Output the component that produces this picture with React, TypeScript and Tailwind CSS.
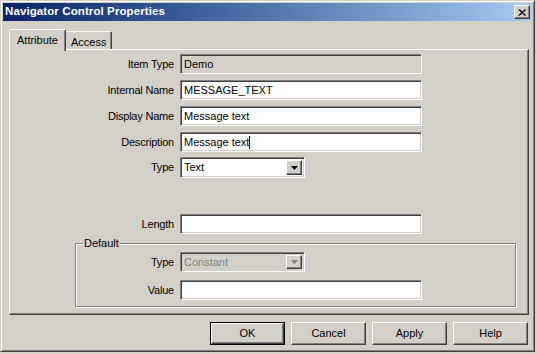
import React from "react";

const font = { fontFamily: '"Liberation Sans", Arial, sans-serif' };

// win2k style 3d edges
const sunken =
  "border border-t-[#808080] border-l-[#808080] border-b-white border-r-white shadow-[inset_1px_1px_0_#404040,inset_-1px_-1px_0_#d4d0c8]";
const raised =
  "border border-t-white border-l-white border-r-[#404040] border-b-[#404040] shadow-[inset_-1px_-1px_0_#808080]";

const Arrow = ({ disabled }: { disabled?: boolean }) => (
  <div className={`w-[16px] h-full flex items-center justify-center bg-[#d4d0c8] ${raised}`}>
    <svg width="7" height="4" viewBox="0 0 7 4">
      <path d="M0 0h7L3.5 4z" fill={disabled ? "#808080" : "#000"} />
    </svg>
  </div>
);

const TextField = ({
  value,
  disabled,
  cursor,
}: {
  value?: string;
  disabled?: boolean;
  cursor?: boolean;
}) => (
  <div
    className={`ml-[6px] w-[242px] h-[20px] flex items-center pl-[3px] text-[11px] ${sunken} ${
      disabled ? "bg-[#d4d0c8]" : "bg-white"
    }`}
  >
    <span>{value}</span>
    {cursor && <span className="w-[1px] h-[13px] bg-black" />}
  </div>
);

const Select = ({ value, disabled, h = "h-[21px]" }: { value: string; disabled?: boolean; h?: string }) => (
  <div
    className={`ml-[6px] w-[125px] ${h} flex items-stretch text-[11px] p-[2px] ${sunken} ${
      disabled ? "bg-[#d4d0c8]" : "bg-white"
    }`}
  >
    <span className={`flex-1 flex items-center pl-[1px] ${disabled ? "text-[#808080]" : ""}`}>{value}</span>
    <Arrow disabled={disabled} />
  </div>
);

const Row = ({
  label,
  w = "w-[164px]",
  className = "",
  children,
}: {
  label: string;
  w?: string;
  className?: string;
  children: React.ReactNode;
}) => (
  <div className={`flex items-center ${className}`}>
    <div className={`${w} text-right text-[11px] tracking-[-0.2px]`}>{label}</div>
    {children}
  </div>
);

const Button = ({ label, isDefault }: { label: string; isDefault?: boolean }) =>
  isDefault ? (
    <div className="w-[75px] h-[23px] border border-black">
      <div className={`w-full h-full flex items-center justify-center text-[11px] ${raised}`}>{label}</div>
    </div>
  ) : (
    <div className={`w-[75px] h-[23px] flex items-center justify-center text-[11px] ${raised}`}>{label}</div>
  );

export default function App() {
  return (
    <div className="w-[537px] h-[354px] bg-[#d4d0c8] text-black" style={font}>
      <div className="w-[535px] h-[352px] p-[2px] border border-t-[#d4d0c8] border-l-[#d4d0c8] border-r-[#404040] border-b-[#404040] shadow-[inset_1px_1px_0_#fff,inset_-1px_-1px_0_#808080] flex flex-col">
        {/* title bar */}
        <div className="h-[18px] flex items-center bg-linear-to-r from-[#0a246a] to-[#a6caf0] pl-[2px] pr-[2px]">
          <span className="flex-1 text-white font-bold text-[11.5px] tracking-[0.1px]">Navigator Control Properties</span>
          <div className={`w-[16px] h-[14px] bg-[#d4d0c8] flex items-center justify-center ${raised}`}>
            <svg width="8" height="7" viewBox="0 0 8 7">
              <path d="M0.5 0.5l6.5 6M1.5 0.5l6.5 6M7 0.5l-6.5 6M8 0.5l-6.5 6" stroke="#000" strokeWidth="1" />
            </svg>
          </div>
        </div>

        {/* tabs */}
        <div className="mt-[8px] ml-[6px] h-[20px] flex items-end">
          <div className="relative z-10 -mb-[2px] h-[22px] px-[7px] pt-[2px] bg-[#d4d0c8] border-t border-l border-white border-r border-r-[#404040] shadow-[inset_-1px_0_0_#808080] rounded-tl-[2px] rounded-tr-[2px] text-[11px]">
            Attribute
          </div>
          <div className="h-[18px] px-[5px] pt-[2px] border-t border-white border-r border-r-[#404040] shadow-[inset_-1px_0_0_#808080] rounded-tr-[2px] text-[11px]">
            Access
          </div>
        </div>

        {/* panel */}
        <div className={`ml-[6px] w-[520px] h-[266px] pt-[4px] flex flex-col ${raised}`}>
          <div className="flex flex-col gap-[6px]">
            <Row label="Item Type">
              <TextField value="Demo" disabled />
            </Row>
            <Row label="Internal Name">
              <TextField value="MESSAGE_TEXT" />
            </Row>
            <Row label="Display Name">
              <TextField value="Message text" />
            </Row>
            <Row label="Description">
              <TextField value="Message text" cursor />
            </Row>
          </div>
          <Row label="Type" className="mt-[5px]">
            <Select value="Text" />
          </Row>
          <Row label="Length" className="mt-[36px]">
            <TextField />
          </Row>

          {/* Default group */}
          <div className="relative mt-[9px] ml-[65px] w-[441px] pt-[8px] pb-[6px] border border-[#808080] shadow-[inset_1px_1px_0_#fff,1px_1px_0_#fff] flex flex-col gap-[8px]">
            <span className="absolute left-[7px] -top-[8px] px-[1px] bg-[#d4d0c8] text-[11px] leading-[14px]">Default</span>
            <Row label="Type" w="w-[98px]">
              <Select value="Constant" disabled h="h-[20px]" />
            </Row>
            <Row label="Value" w="w-[98px]">
              <TextField />
            </Row>
          </div>
        </div>

        {/* buttons */}
        <div className="mt-[7px] flex justify-end gap-[6px] pr-[4px]">
          <Button label="OK" isDefault />
          <Button label="Cancel" />
          <Button label="Apply" />
          <Button label="Help" />
        </div>
      </div>
    </div>
  );
}
